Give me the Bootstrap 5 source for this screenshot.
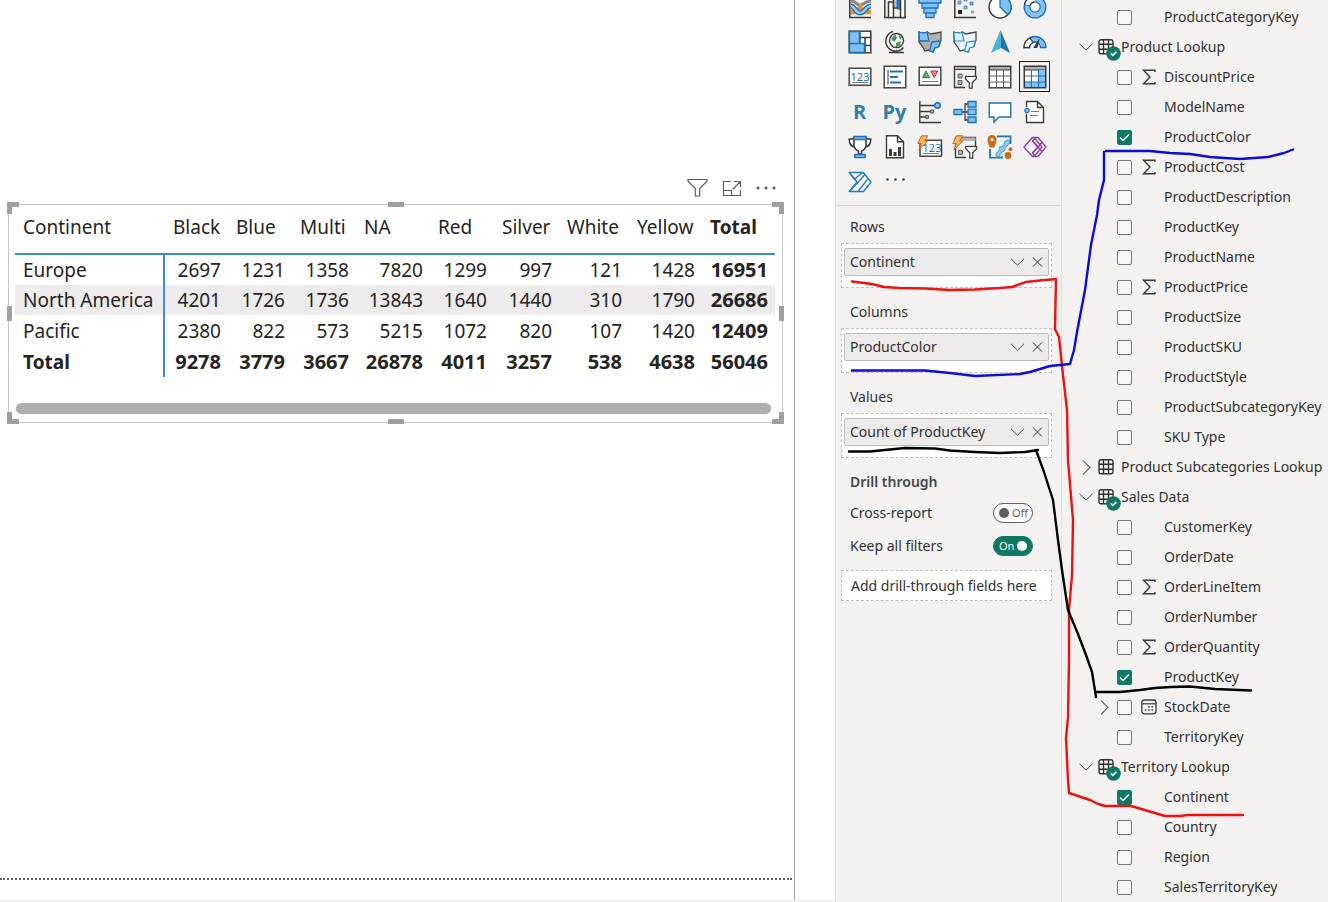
<!DOCTYPE html>
<html lang="en">
<head>
<meta charset="utf-8">
<meta name="viewport" content="width=device-width, initial-scale=1">
<title>Sales by continent and product color</title>
<link href="https://cdn.jsdelivr.net/npm/bootstrap@5.3.0/dist/css/bootstrap.min.css" rel="stylesheet">
<style>
  body { font-family: "Noto Sans", sans-serif; font-size: 14px; line-height: 20px; color: #323130; background: #fff; }
  svg { display: block; flex: none; }
  button { padding: 0; border: 0; background: none; color: inherit; }
  .workspace { min-height: 100vh; }

  /* report canvas */
  .canvas-area { min-width: 0; border-bottom: 2px solid #f3f2f1; }
  .report-page { margin-right: 40px; border-right: 1px solid #a6a6a6; padding: 176px 11px 20px 0; }
  .visual-tools { gap: 14px; height: 24px; padding-right: 7px; color: #605e5c; }
  .visual-frame { margin: 4px 0 0 8px; padding: 0 8px 8px 6px; border: 1px solid #c8c6c4; }
  .handle { position: absolute; background: #a19f9d; }
  .h-top { top: -3px; left: 50%; width: 16px; height: 5px; margin-left: -8px; }
  .h-bottom { bottom: -2px; left: 50%; width: 16px; height: 5px; margin-left: -8px; }
  .h-left { left: -2px; top: 50%; width: 5px; height: 15px; margin-top: -8px; }
  .h-right { right: -2px; top: 50%; width: 5px; height: 15px; margin-top: -8px; }
  .corner { position: absolute; width: 12px; height: 12px; border: 0 solid #a19f9d; }
  .c-tl { top: -3px; left: -2px; border-width: 5px 0 0 5px; }
  .c-tr { top: -3px; right: -2px; border-width: 5px 5px 0 0; }
  .c-bl { bottom: -2px; left: -2px; border-width: 0 0 5px 5px; }
  .c-br { bottom: -2px; right: -2px; border-width: 0 5px 5px 0; }
  .matrix { width: 100%; table-layout: fixed; border-collapse: separate; border-spacing: 0; font-size: 19px; line-height: 30px; color: #252423; white-space: nowrap; }
  .matrix th, .matrix td { padding: 0 7px 0 8px; font-weight: 400; }
  .matrix thead th { height: 50px; padding-right: 0; padding-bottom: 4px; border-bottom: 2px solid #3a8dde; text-align: left; }
  .matrix td { text-align: right; }
  .matrix tbody th { border-right: 2px solid #3a8dde; text-align: left; padding-right: 0; }
  .matrix .band > * { background: #edebeb; }
  .matrix tfoot td, .matrix tfoot th, .matrix td:last-child, .matrix thead th:last-child { font-weight: 700; font-size: 20px; }
  .matrix tbody tr:last-child > * { line-height: 32px; }
  .matrix tfoot th { border-right: 2px solid #3a8dde; text-align: left; }
  .matrix tfoot th, .matrix thead th:last-child { font-size: 19px; }
  .scroll-thumb { height: 11px; margin: 26px 3px 0 1px; border-radius: 6px; background: #b0aeac; }
  .page-edge { border-top: 2px dotted #605e5c; margin-right: -9px; }

  /* side panes */
  .side { background: #f3f2f1; }
  .viz-pane { width: 227px; overflow: hidden; border-left: 1px solid #e1dfdd; border-right: 1px solid #e1dfdd; }
  .viz-grid { display: grid; grid-template-columns: repeat(6, 35px); grid-auto-rows: 35px; margin-top: -11px; padding: 0 0 6px 6px; border-bottom: 1px solid #d8d6d4; }
  .viz-grid button { display: grid; place-items: center; }
  .viz-grid .chosen { outline: 1px solid #201f1e; outline-offset: -3px; }
  .glyph { font-family: "Open Sans", sans-serif; font-weight: 700; font-size: 20px; }
  .viz-grid .glyph { color: #2f7fa8; }
  .wells { padding: 11px 9px 0 5px; }
  .wells h2 { margin: 0 0 6px 9px; font-size: 14px; line-height: 20px; font-weight: 400; }
  .well { height: 45px; margin-bottom: 14px; padding: 4px 2px; border: 1px dashed #c0bebc; background: #fff; }
  .field-chip { height: 28px; padding: 0 5px; gap: 7px; border: 1px solid #bebbb8; border-radius: 2px; background: #edebe9; }
  .wells .drill { margin: 12px 0 0 9px; font-weight: 600; color: #484644; }
  .toggle-row { height: 33px; padding: 0 19px 0 9px; }
  .pill { width: 40px; height: 20px; gap: 3px; padding: 0 4px 0 5px; border: 1px solid #605e5c; border-radius: 10px; background: #fff; font-size: 11px; line-height: 18px; color: #605e5c; }
  .pill input { appearance: none; flex: none; width: 10px; height: 10px; margin: 0; border-radius: 50%; background: #605e5c; }
  .pill.on { border-color: #117865; background: #117865; color: #fff; }
  .pill.on input { background: #fff; }
  .drop-here { margin-top: 8px; height: 31px; line-height: 29px; padding-left: 9px; border: 1px dashed #c0bebc; background: #fff; }

  .data-pane { width: 266px; padding-top: 2px; }
  .trow, .frow { height: 30px; white-space: nowrap; }
  .trow { padding-left: 17px; }
  .trow button { width: 14px; margin-right: 5px; }
  .tbl { width: 23px; height: 16px; position: relative; }
  .tick { position: absolute; left: 8px; top: 7px; }
  .frow { padding-left: 38px; }
  .expand { width: 17px; }
  .frow label { gap: 9px; }
  .kind { width: 16px; margin-right: -2px; }
  .frow input { appearance: none; flex: none; width: 15px; height: 15px; margin: 0; border: 1px solid #797775; border-radius: 2px; background: #f8f7f6; }
  .frow input:checked { border-color: #117865; background: #117865 url("data:image/svg+xml,%3Csvg xmlns='http://www.w3.org/2000/svg' viewBox='0 0 13 13'%3E%3Cpath d='M2 6.5l3 3 6-6' fill='none' stroke='%23fff' stroke-width='1.3'/%3E%3C/svg%3E"); }
  .ink { position: absolute; top: 0; right: 0; pointer-events: none; }
</style>
</head>
<body>
<svg width="0" height="0" class="position-absolute" aria-hidden="true">
  <symbol id="down" viewBox="0 0 14 8"><path d="M.5 .8L7 7.2 13.500 .8" fill="none" stroke="#484644"/></symbol>
  <symbol id="right" viewBox="0 0 8 14"><path d="M.8 .5L7.200 7 .8 13.500" fill="none" stroke="#605e5c"/></symbol>
  <symbol id="close" viewBox="0 0 10 10"><path d="M.5 .5l9 9M9.500 .5l-9 9" fill="none" stroke="#323130"/></symbol>
  <symbol id="grid" viewBox="0 0 16 16"><path d="M3 .8h10a2 2 0 0 1 2 2v10a2 2 0 0 1-2 2H3a2 2 0 0 1-2-2v-10a2 2 0 0 1 2-2zM5.500 .8v14M10.500 .8v14M1 5.300h14M1 10.300h14" fill="none" stroke="#323130" stroke-width="1.400"/></symbol>
  <symbol id="ok" viewBox="0 0 15 15"><circle cx="7.500" cy="7.500" r="7.300" fill="#117865"/><path d="M4.800 7.500l2 1.900 3.600-3.500" fill="none" stroke="#fff" stroke-width="1.500"/></symbol>
  <symbol id="sigma" viewBox="0 0 16 16"><path d="M14 3V1.200H2.500L9 8l-6.500 6.800H14V13" fill="none" stroke="#3b3a39" stroke-width="1.400"/></symbol>
  <symbol id="cal" viewBox="0 0 16 16"><rect x=".8" y="1" width="14.200" height="13.800" rx="2.500" fill="none" stroke="#3b3a39" stroke-width="1.300"/><path d="M1 4.800h14" stroke="#3b3a39" stroke-width="1.200"/><path d="M7.200 7.800h1.500M10.500 7.800H12M3.900 11h1.500M7.200 11h1.500M10.500 11H12" stroke="#3b3a39" stroke-width="1.500"/></symbol>
  <symbol id="bolt" viewBox="0 0 12 16"><path d="M4.500 .8h6.300L7.600 5.800h3.200L2 15l2.200-6.500H.8z" fill="#fcb45c" stroke="#c4671a"/></symbol>
  <symbol id="filt" viewBox="0 0 13 14"><path d="M.7 1h11.600v2L8 7.500V13H5V7.500L.7 3z" fill="#fff" stroke="#3b3a39" stroke-width="1.300"/></symbol>
</svg>

<div class="workspace d-flex">
  <main class="canvas-area flex-grow-1 d-flex flex-column">
    <div class="report-page flex-grow-1 d-flex flex-column">
      <div class="visual-tools d-flex justify-content-end align-items-center">
        <button type="button" aria-label="Filters"><svg width="21" height="20" viewBox="0 0 21 20"><path d="M1 1.500h19v1.700l-7.300 7.300V18H8.300v-7.500L1 3.200z" fill="none" stroke="#605e5c" stroke-width="1.200"/></svg></button>
        <button type="button" aria-label="Focus mode"><svg width="20" height="18" viewBox="0 0 20 18"><path d="M9 2.500H1.500v14h17V11M1.500 11.500h8v5M12 2.500h6.500V8M10.500 10.500l8-8" fill="none" stroke="#605e5c" stroke-width="1.200"/></svg></button>
        <button type="button" aria-label="More options"><svg width="20" height="4" viewBox="0 0 20 4"><g fill="#605e5c"><circle cx="2" cy="2" r="1.600"/><circle cx="10" cy="2" r="1.600"/><circle cx="18" cy="2" r="1.600"/></g></svg></button>
      </div>
      <section class="visual-frame position-relative" aria-label="Matrix">
        <table class="matrix">
          <colgroup><col style="width:150px"><col style="width:63px"><col style="width:64px"><col style="width:64px"><col style="width:74px"><col style="width:64px"><col style="width:65px"><col style="width:70px"><col style="width:73px"><col style="width:73px"></colgroup>
          <thead><tr><th scope="col">Continent</th><th scope="col">Black</th><th scope="col">Blue</th><th scope="col">Multi</th><th scope="col">NA</th><th scope="col">Red</th><th scope="col">Silver</th><th scope="col">White</th><th scope="col">Yellow</th><th scope="col">Total</th></tr></thead>
          <tbody>
            <tr><th scope="row">Europe</th><td>2697</td><td>1231</td><td>1358</td><td>7820</td><td>1299</td><td>997</td><td>121</td><td>1428</td><td>16951</td></tr>
            <tr class="band"><th scope="row">North America</th><td>4201</td><td>1726</td><td>1736</td><td>13843</td><td>1640</td><td>1440</td><td>310</td><td>1790</td><td>26686</td></tr>
            <tr><th scope="row">Pacific</th><td>2380</td><td>822</td><td>573</td><td>5215</td><td>1072</td><td>820</td><td>107</td><td>1420</td><td>12409</td></tr>
          </tbody>
          <tfoot><tr><th scope="row">Total</th><td>9278</td><td>3779</td><td>3667</td><td>26878</td><td>4011</td><td>3257</td><td>538</td><td>4638</td><td>56046</td></tr></tfoot>
        </table>
        <div class="scroll-thumb"></div>
        <span class="corner c-tl"></span><span class="corner c-tr"></span><span class="corner c-bl"></span><span class="corner c-br"></span>
        <span class="handle h-top"></span><span class="handle h-bottom"></span><span class="handle h-left"></span><span class="handle h-right"></span>
      </section>
      <div class="page-edge mt-auto"></div>
    </div>
  </main>

  <div class="side d-flex flex-shrink-0 position-relative">
    <aside class="viz-pane" aria-label="Visualizations">
      <div class="viz-grid">
        <button type="button" aria-label="Ribbon chart"><svg width="24" height="24" viewBox="0 0 24 24" fill="none"><path d="M3 6c5 0 5 4 9 4s5-4 11-4" stroke="#8a8886" stroke-width="3"/><path d="M3 17h5l4-5 4 5h7" stroke="#e8912d" stroke-width="4.500"/><path d="M3 11c4 0 4 7 9 7s5-7 11-7" stroke="#1d70b8" stroke-width="5"/><path d="M3 11c4 0 4 7 9 7s5-7 11-7" stroke="#9ccff7" stroke-width="2.200"/><path d="M1.800 1v21.500H23" stroke="#3b3a39" stroke-width="1.600"/></svg></button>
        <button type="button" aria-label="Waterfall chart"><svg width="24" height="24" viewBox="0 0 24 24" fill="none" stroke="#3b3a39" stroke-width="1.500"><path d="M1.800 1v21.500H23"/><path d="M5.500 22.500V7h5v15.500z" fill="#fff"/><path d="M10.500 1h5v12h-5z" fill="#c8c6c4"/><path d="M14 1v13h3V1z" fill="#2b7fc4" stroke="#1d70b8" stroke-width="1"/><path d="M17.500 22.500V1H22v21.500z" fill="#fff"/></svg></button>
        <button type="button" aria-label="Funnel"><svg width="24" height="24" viewBox="0 0 24 24" fill="#7fc0f5" stroke="#1d70b8" stroke-width="1.300"><path d="M1 1h22v7H1zM4 8h16v5H4zM6 13h12v5H6zM8 18h8v4.500H8z"/></svg></button>
        <button type="button" aria-label="Scatter chart"><svg width="24" height="24" viewBox="0 0 24 24"><path d="M1.800 1v21.500H23" stroke="#3b3a39" stroke-width="1.500" fill="none"/><g fill="#8fb6d8" stroke="#3f7fb5" stroke-width=".8"><path d="M5 6h3v3H5zM11 11h3v3h-3zM17 7h3v3h-3zM11 4h3v2h-3z"/></g><path d="M5 15h4v4H5z" fill="#252423"/><path d="M18 15.500h3v3h-3z" fill="#a19f9d"/></svg></button>
        <button type="button" aria-label="Pie chart"><svg width="24" height="24" viewBox="0 0 24 24"><circle cx="12" cy="12" r="11" fill="#fff" stroke="#3b3a39" stroke-width="1.400"/><path d="M12 1a11 11 0 0 1 7.800 18.800L12 12z" fill="#7fc0f5" stroke="#1d70b8" stroke-width="1.300"/></svg></button>
        <button type="button" aria-label="Donut chart"><svg width="24" height="24" viewBox="0 0 24 24"><circle cx="12" cy="12" r="8" fill="#fff" stroke="#1d70b8" stroke-width="7"/><circle cx="12" cy="12" r="8" fill="none" stroke="#7fc0f5" stroke-width="4.500"/><path d="M12 4a8 8 0 0 0-7.800 6.500" fill="none" stroke="#3b3a39" stroke-width="7"/><path d="M12 4a8 8 0 0 0-7.600 6" fill="none" stroke="#fff" stroke-width="4.500"/></svg></button>

        <button type="button" aria-label="Treemap"><svg width="24" height="24" viewBox="0 0 24 24" stroke-width="1.500"><rect x="1.200" y="1.200" width="21.600" height="21.600" fill="#fff" stroke="#3b3a39"/><path d="M11.500 7.500h11.300M17 7.500v15M17 15.500h6" stroke="#3b3a39"/><path d="M12 1.500v21M1.500 13.500H12" stroke="#1d70b8"/><path d="M1.500 1.500h10v12h-10zM1.500 13.500h15v9h-15z" fill="#7fc0f5" stroke="#1d70b8"/></svg></button>
        <button type="button" aria-label="Map"><svg width="24" height="24" viewBox="0 0 24 24" fill="none" stroke="#3b3a39" stroke-width="1.400"><circle cx="13.500" cy="10.500" r="7" fill="#fff"/><path d="M8.500 8l4-3.500 1.500 3-2 4-3-1zM13 13l5-2-1 5-4 1zM16 5l3.500 3-3 1z" fill="#3f9a58" stroke="none"/><path d="M10 1.500a10 10 0 1 0 10.500 16M13.500 20v2.500M6 22.500h15"/></svg></button>
        <button type="button" aria-label="Filled map"><svg width="24" height="24" viewBox="0 0 24 24"><path d="M1 2q5 2 8 0l4 2 5-1 5-1v8l-2 6-4 1-2 5-4-2-4 1-3-5-3-4z" fill="#b3b0ad" stroke="#4a4846" stroke-width="1.300"/><path d="M1 2q5 2 8 0l2 9H1.500zM14 12l8.500-1-2 6-4 1-1 4-4-1z" fill="#7fc0f5" stroke="#1d70b8" stroke-width="1.300"/></svg></button>
        <button type="button" aria-label="Shape map"><svg width="24" height="24" viewBox="0 0 24 24"><path d="M1 2q5 2 8 0l4 2 5-1 5-1v8l-2 6-4 1-2 5-4-2-4 1-3-5-3-4z" fill="#eef7fd" stroke="#4a4846" stroke-width="1.300"/><path d="M1 2q5 2 8 0l2 9H1.500zM14 12l8.500-1-2 6-4 1-1 4-4-1z" fill="#e3f2fd" stroke="#2b88d8" stroke-width="1.200"/></svg></button>
        <button type="button" aria-label="Azure map"><svg width="24" height="24" viewBox="0 0 24 24"><path d="M12.500 0L3 23l10-5z" fill="#45b5dc"/><path d="M12.500 0L22 23l-9-5z" fill="#2272b4"/></svg></button>
        <button type="button" aria-label="Gauge"><svg width="24" height="24" viewBox="0 0 24 24"><path d="M1 17.500a11 11 0 0 1 22 0h-5.500a5.500 5.500 0 0 0-11 0z" fill="#7fc0f5" stroke="#1d70b8" stroke-width="1.300"/><path d="M1 17.500A11 11 0 0 1 7 8l3 4.500a5.500 5.500 0 0 0-3.500 5z" fill="#fff" stroke="#3b3a39" stroke-width="1.300"/><path d="M11 17.500l5-8-2 8z" fill="#3b3a39" stroke="#3b3a39"/></svg></button>

        <button type="button" aria-label="Card"><svg width="24" height="24" viewBox="0 0 24 24"><rect x="1.200" y="3.200" width="21.600" height="17" fill="#fff" stroke="#3b3a39" stroke-width="1.400"/><text x="12" y="15.500" text-anchor="middle" font-size="11" fill="#1d70b8">123</text><path d="M4 17.500h16" stroke="#7a7775"/></svg></button>
        <button type="button" aria-label="Multi-row card"><svg width="24" height="24" viewBox="0 0 24 24"><rect x="1.200" y="1.200" width="21.600" height="21.600" fill="#fff" stroke="#3b3a39" stroke-width="1.400"/><path d="M5 5v14.500" stroke="#3b3a39"/><path d="M7 6.500h13M7 12h8M7 17.500h11" stroke="#1d70b8" stroke-width="2"/></svg></button>
        <button type="button" aria-label="KPI"><svg width="24" height="24" viewBox="0 0 24 24"><rect x="1.200" y="2.200" width="21.600" height="18" fill="#fff" stroke="#3b3a39" stroke-width="1.400"/><path d="M4.500 12.500L8 6l3.500 6.500z" fill="#5fae6e" stroke="#2c7d3f"/><path d="M12.800 6h7l-3.500 6.500z" fill="#f0868a" stroke="#c4262e"/><path d="M4 16.500h16" stroke="#7a7775"/></svg></button>
        <button type="button" aria-label="Slicer"><svg width="24" height="24" viewBox="0 0 24 24"><path d="M12 22.500H1.500V1.500h21V11" fill="#f3f2f1" stroke="#3b3a39" stroke-width="1.400"/><path d="M1.500 1.500h21v3h-21z" fill="#b3b0ad" stroke="#3b3a39"/><path d="M5 9h4v4H5zM5 15.500h4v4H5z" fill="#b3b0ad" stroke="#605e5c"/><use href="#filt" x="11.500" y="10.500" width="12.500" height="13.500"/></svg></button>
        <button type="button" aria-label="Table"><svg width="24" height="24" viewBox="0 0 24 24" stroke="#3b3a39"><rect x="1.200" y="1.200" width="21.600" height="21.600" fill="#fff" stroke-width="1.400"/><path d="M1.500 1.500h21v3.500h-21z" fill="#b3b0ad"/><path d="M8.500 5v17.500M15.500 5v17.500M1.500 11h21M1.500 17h21" stroke="#605e5c"/></svg></button>
        <button type="button" class="chosen" aria-label="Matrix" aria-pressed="true"><svg width="24" height="24" viewBox="0 0 24 24" stroke="#3b3a39"><rect x="1.200" y="1.200" width="21.600" height="21.600" fill="#fff" stroke-width="1.400"/><path d="M1.500 1.500h21v3.500h-21z" fill="#b3b0ad"/><path d="M15.500 5h7v17.500h-21V17h14z" fill="#7fc0f5" stroke="none"/><path d="M8.500 5v17.500M15.500 5v17.500M1.500 11h21M1.500 17h21" stroke="#1d70b8"/><path d="M1.500 5v17.500h21V5" fill="none"/></svg></button>

        <button type="button" class="glyph">R</button>
        <button type="button" class="glyph">Py</button>
        <button type="button" aria-label="Key influencers"><svg width="24" height="24" viewBox="0 0 24 24" fill="none" stroke="#3b3a39" stroke-width="1.400"><path d="M1.800 1v21.500H23M2 5.500h15M2 11.500h10M2 17h5"/><circle cx="19.500" cy="5.500" r="2.800" fill="#7fc0f5" stroke="#1d70b8"/><circle cx="14" cy="11.500" r="1.600" fill="#c8c6c4" stroke="#605e5c"/><circle cx="9" cy="17" r="1.600" fill="#c8c6c4" stroke="#605e5c"/></svg></button>
        <button type="button" aria-label="Decomposition tree"><svg width="24" height="24" viewBox="0 0 24 24" stroke="#1d70b8" stroke-width="1.300"><path d="M9 12h6M15 4h-3v16h3" fill="none" stroke="#3b3a39"/><path d="M1 9.500h8v5H1zM15 1.500h8v5.500h-8zM15 9.200h8v5.500h-8zM15 17h8v5.500h-8z" fill="#7fc0f5"/></svg></button>
        <button type="button" aria-label="Q&amp;A"><svg width="24" height="24" viewBox="0 0 24 24"><path d="M1.200 3h21.600v14H11l-5 5v-5H1.200z" fill="#fff" stroke="#1d70b8" stroke-width="1.400"/></svg></button>
        <button type="button" aria-label="Smart narrative"><svg width="24" height="24" viewBox="0 0 24 24" fill="none"><path d="M3.500 7V1.500h11l6 6v15h-17v-9M14.500 1.500v6h6" fill="#fff" stroke="#3b3a39" stroke-width="1.400"/><circle cx="4" cy="10.500" r="2.200" fill="#7fc0f5" stroke="#1d70b8" stroke-width="1.200"/><path d="M8 11.500h8M7 15.500h8" stroke="#3b8ac4" stroke-width="1.200"/></svg></button>

        <button type="button" aria-label="Goals"><svg width="24" height="24" viewBox="0 0 24 24" fill="#fff" stroke="#3b3a39" stroke-width="1.500"><path d="M6 4H1.200q0 8 6.300 8M18 4h4.800q0 8-6.300 8" fill="none"/><path d="M6 2h12v9q-1 4-4.500 5v3h-3v-3Q7 15 6 11z"/><path d="M6 1.500h12v3H6zM7 19.500h10v3H7z" fill="#7fc0f5" stroke="#1d70b8"/></svg></button>
        <button type="button" aria-label="Paginated report"><svg width="24" height="24" viewBox="0 0 24 24"><path d="M3.500 .8h11l6 6v16h-17zM14.500 .8v6h6" fill="#fff" stroke="#3b3a39" stroke-width="1.400"/><path d="M6 14h3v7H6zM10.500 17h3v4h-3zM15 12h3v9h-3z" fill="#3b3a39"/></svg></button>
        <button type="button" aria-label="Card (new)"><svg width="26" height="24" viewBox="0 0 26 24"><rect x="3" y="5.200" width="21.500" height="16" fill="#fff" stroke="#3b3a39" stroke-width="1.400"/><text x="15" y="16.500" text-anchor="middle" font-size="11" fill="#1d70b8">123</text><path d="M6 18.500h16" stroke="#7a7775"/><use href="#bolt" x="0" y="0" width="12" height="16"/></svg></button>
        <button type="button" aria-label="Slicer (new)"><svg width="26" height="24" viewBox="0 0 26 24"><path d="M14 22.500H3.500V2.500h20V11" fill="#f3f2f1" stroke="#3b3a39" stroke-width="1.400"/><path d="M9 2.500h14.500v3.500H9z" fill="#b3b0ad"/><path d="M6.500 15.500h4v4h-4z" fill="#b3b0ad" stroke="#605e5c"/><use href="#filt" x="13" y="10.500" width="12.500" height="13.500"/><use href="#bolt" x="0" y="0" width="12" height="16"/></svg></button>
        <button type="button" aria-label="ArcGIS map"><svg width="26" height="24" viewBox="0 0 26 24"><path d="M3 14v8.500h13M10 1.500h13.500V9" fill="none" stroke="#1d70b8" stroke-width="1.800"/><path d="M4 14l6-3V2.500h12.500V7L19 9l-2 6-3 3v4H4z" fill="#edf5fb"/><path d="M22.500 5v4l-4 3-1 4-4 2-1 4H9v-4l3-2 .5-4 4-1 1-4 2-2z" fill="#8cc4f0" stroke="#3f8fd0" stroke-width=".8"/><path d="M5 0a4.500 4.500 0 0 1 4.500 4.500c0 3-1 5-2.500 8H3C1.500 9.500.5 7.500.5 4.500A4.500 4.500 0 0 1 5 0z" fill="#d06a10"/><circle cx="5" cy="4.500" r="1.600" fill="#fff"/><circle cx="21" cy="20.500" r="3.400" fill="#d06a10"/><circle cx="23.500" cy="14.300" r="2" fill="#d06a10"/></svg></button>
        <button type="button" aria-label="Power Apps"><svg width="24" height="24" viewBox="0 0 24 24" fill="none" stroke="#90389a" stroke-width="1.300" stroke-linejoin="round"><path d="M11 2.500H9.500L1 12l8.500 9.500H11"/><path d="M12.500 2.500H15L23 12l-8 9.500h-2.500L9.500 18l5.500-6-5.500-6z"/><path d="M15 12l4-4.500M15 12l4 4.500M9.500 6l5.500 6-5.500 6M11 2.500l8 9.500-8 9.500"/></svg></button>

        <button type="button" aria-label="Power Automate"><svg width="24" height="24" viewBox="0 0 24 24" fill="#fff" stroke="#1f78d1" stroke-width="1.400" stroke-linejoin="round"><path d="M1.200 2.500h14L23 12l-7.500 9.500H1.200L9 12z"/><path d="M3 5l3.500 4.200 8-6.700M2 21L17 4.500M10 21.500l9.500-12.300" fill="none"/></svg></button>
        <button type="button" aria-label="Get more visuals"><svg width="24" height="24" viewBox="0 0 24 24" fill="#3b3a39"><circle cx="4.500" cy="9.500" r="1.200"/><circle cx="12.500" cy="9.500" r="1.200"/><circle cx="20.500" cy="9.500" r="1.200"/></svg></button>
      </div>

      <div class="wells">
        <h2>Rows</h2>
        <div class="well"><div class="field-chip d-flex align-items-center"><span class="flex-grow-1">Continent</span><button type="button" aria-label="Field options"><svg width="15" height="8"><use href="#down"/></svg></button><button type="button" aria-label="Remove field"><svg width="11" height="10"><use href="#close"/></svg></button></div></div>
        <h2>Columns</h2>
        <div class="well"><div class="field-chip d-flex align-items-center"><span class="flex-grow-1">ProductColor</span><button type="button" aria-label="Field options"><svg width="15" height="8"><use href="#down"/></svg></button><button type="button" aria-label="Remove field"><svg width="11" height="10"><use href="#close"/></svg></button></div></div>
        <h2>Values</h2>
        <div class="well"><div class="field-chip d-flex align-items-center"><span class="flex-grow-1">Count of ProductKey</span><button type="button" aria-label="Field options"><svg width="15" height="8"><use href="#down"/></svg></button><button type="button" aria-label="Remove field"><svg width="11" height="10"><use href="#close"/></svg></button></div></div>
        <h2 class="drill">Drill through</h2>
        <div class="mt-1">
          <div class="toggle-row d-flex justify-content-between align-items-center"><span id="cross">Cross-report</span><label class="pill d-flex align-items-center"><input type="checkbox" role="switch" aria-labelledby="cross"><span>Off</span></label></div>
          <div class="toggle-row d-flex justify-content-between align-items-center"><span id="keep">Keep all filters</span><label class="pill on d-flex align-items-center"><span>On</span><input type="checkbox" role="switch" aria-labelledby="keep" checked></label></div>
        </div>
        <div class="drop-here">Add drill-through fields here</div>
      </div>
    </aside>

    <aside class="data-pane" aria-label="Data">
      <div class="frow d-flex align-items-center"><span class="expand"></span><label class="d-flex align-items-center"><input type="checkbox"><span class="kind"></span><span>ProductCategoryKey</span></label></div>
      <div class="trow d-flex align-items-center"><button type="button" aria-label="Collapse"><svg width="14" height="8"><use href="#down"/></svg></button><span class="tbl"><svg width="16" height="16"><use href="#grid"/></svg><svg class="tick" width="15" height="15"><use href="#ok"/></svg></span><span>Product Lookup</span></div>
      <div class="frow d-flex align-items-center"><span class="expand"></span><label class="d-flex align-items-center"><input type="checkbox"><span class="kind"><svg width="16" height="16"><use href="#sigma"/></svg></span><span>DiscountPrice</span></label></div>
      <div class="frow d-flex align-items-center"><span class="expand"></span><label class="d-flex align-items-center"><input type="checkbox"><span class="kind"></span><span>ModelName</span></label></div>
      <div class="frow d-flex align-items-center"><span class="expand"></span><label class="d-flex align-items-center"><input type="checkbox" checked><span class="kind"></span><span>ProductColor</span></label></div>
      <div class="frow d-flex align-items-center"><span class="expand"></span><label class="d-flex align-items-center"><input type="checkbox"><span class="kind"><svg width="16" height="16"><use href="#sigma"/></svg></span><span>ProductCost</span></label></div>
      <div class="frow d-flex align-items-center"><span class="expand"></span><label class="d-flex align-items-center"><input type="checkbox"><span class="kind"></span><span>ProductDescription</span></label></div>
      <div class="frow d-flex align-items-center"><span class="expand"></span><label class="d-flex align-items-center"><input type="checkbox"><span class="kind"></span><span>ProductKey</span></label></div>
      <div class="frow d-flex align-items-center"><span class="expand"></span><label class="d-flex align-items-center"><input type="checkbox"><span class="kind"></span><span>ProductName</span></label></div>
      <div class="frow d-flex align-items-center"><span class="expand"></span><label class="d-flex align-items-center"><input type="checkbox"><span class="kind"><svg width="16" height="16"><use href="#sigma"/></svg></span><span>ProductPrice</span></label></div>
      <div class="frow d-flex align-items-center"><span class="expand"></span><label class="d-flex align-items-center"><input type="checkbox"><span class="kind"></span><span>ProductSize</span></label></div>
      <div class="frow d-flex align-items-center"><span class="expand"></span><label class="d-flex align-items-center"><input type="checkbox"><span class="kind"></span><span>ProductSKU</span></label></div>
      <div class="frow d-flex align-items-center"><span class="expand"></span><label class="d-flex align-items-center"><input type="checkbox"><span class="kind"></span><span>ProductStyle</span></label></div>
      <div class="frow d-flex align-items-center"><span class="expand"></span><label class="d-flex align-items-center"><input type="checkbox"><span class="kind"></span><span>ProductSubcategoryKey</span></label></div>
      <div class="frow d-flex align-items-center"><span class="expand"></span><label class="d-flex align-items-center"><input type="checkbox"><span class="kind"></span><span>SKU Type</span></label></div>
      <div class="trow d-flex align-items-center"><button type="button" aria-label="Expand"><svg class="mx-auto" width="9" height="15"><use href="#right"/></svg></button><span class="tbl"><svg width="16" height="16"><use href="#grid"/></svg></span><span>Product Subcategories Lookup</span></div>
      <div class="trow d-flex align-items-center"><button type="button" aria-label="Collapse"><svg width="14" height="8"><use href="#down"/></svg></button><span class="tbl"><svg width="16" height="16"><use href="#grid"/></svg><svg class="tick" width="15" height="15"><use href="#ok"/></svg></span><span>Sales Data</span></div>
      <div class="frow d-flex align-items-center"><span class="expand"></span><label class="d-flex align-items-center"><input type="checkbox"><span class="kind"></span><span>CustomerKey</span></label></div>
      <div class="frow d-flex align-items-center"><span class="expand"></span><label class="d-flex align-items-center"><input type="checkbox"><span class="kind"></span><span>OrderDate</span></label></div>
      <div class="frow d-flex align-items-center"><span class="expand"></span><label class="d-flex align-items-center"><input type="checkbox"><span class="kind"><svg width="16" height="16"><use href="#sigma"/></svg></span><span>OrderLineItem</span></label></div>
      <div class="frow d-flex align-items-center"><span class="expand"></span><label class="d-flex align-items-center"><input type="checkbox"><span class="kind"></span><span>OrderNumber</span></label></div>
      <div class="frow d-flex align-items-center"><span class="expand"></span><label class="d-flex align-items-center"><input type="checkbox"><span class="kind"><svg width="16" height="16"><use href="#sigma"/></svg></span><span>OrderQuantity</span></label></div>
      <div class="frow d-flex align-items-center"><span class="expand"></span><label class="d-flex align-items-center"><input type="checkbox" checked><span class="kind"></span><span>ProductKey</span></label></div>
      <div class="frow d-flex align-items-center"><button type="button" class="expand" aria-label="Expand"><svg width="9" height="15"><use href="#right"/></svg></button><label class="d-flex align-items-center"><input type="checkbox"><span class="kind"><svg width="16" height="16"><use href="#cal"/></svg></span><span>StockDate</span></label></div>
      <div class="frow d-flex align-items-center"><span class="expand"></span><label class="d-flex align-items-center"><input type="checkbox"><span class="kind"></span><span>TerritoryKey</span></label></div>
      <div class="trow d-flex align-items-center"><button type="button" aria-label="Collapse"><svg width="14" height="8"><use href="#down"/></svg></button><span class="tbl"><svg width="16" height="16"><use href="#grid"/></svg><svg class="tick" width="15" height="15"><use href="#ok"/></svg></span><span>Territory Lookup</span></div>
      <div class="frow d-flex align-items-center"><span class="expand"></span><label class="d-flex align-items-center"><input type="checkbox" checked><span class="kind"></span><span>Continent</span></label></div>
      <div class="frow d-flex align-items-center"><span class="expand"></span><label class="d-flex align-items-center"><input type="checkbox"><span class="kind"></span><span>Country</span></label></div>
      <div class="frow d-flex align-items-center"><span class="expand"></span><label class="d-flex align-items-center"><input type="checkbox"><span class="kind"></span><span>Region</span></label></div>
      <div class="frow d-flex align-items-center"><span class="expand"></span><label class="d-flex align-items-center"><input type="checkbox"><span class="kind"></span><span>SalesTerritoryKey</span></label></div>
    </aside>

    <!-- hand-drawn links from each well to its field -->
    <svg class="ink" width="492" height="902" viewBox="836 0 492 902" fill="none" stroke-width="2.400" stroke-linecap="round" stroke-linejoin="round" aria-hidden="true">
      <path stroke="#ee1111" d="M852 281.500L864 283 872 284 884 287 900 288 925 288.500 950 290 975 289.500 1000 288 1012 287 1026 282 1040 280.500 1056 279 1055 329 1059 337 1063 375 1067 410 1068 460 1073 520 1072 575 1069 610 1069 660 1068 718 1066 738 1068 780 1069 793 1090 800 1098 804 1105 806 1131 806 1148 811 1165 816 1180 816 1188 815 1243 815"/>
      <path stroke="#0b0be0" d="M852 370.500H925L950 373 975 376 1020 374 1030 372 1050 366 1070 364 1074 350 1077 332 1085 290 1091 245 1097 215 1099 200 1104 180 1104 152M1106 151H1150L1170 153 1190 154 1210 157 1240 159 1268 157 1284 153 1293 149.500"/>
      <path stroke="#000" d="M849 451.500H870L890 449.500 905 448 935 448.500 950 450.500 975 452 1000 453 1025 452 1038 450M1036 450L1044 472 1053 500 1058 540 1062 570 1068 610 1078 634 1086 655 1092 672 1096 697M1097 692H1120L1140 690 1155 688 1170 687 1190 686.500 1215 689 1251 690.500"/>
    </svg>
  </div>
</div>
<script src="https://cdn.jsdelivr.net/npm/bootstrap@5.3.0/dist/js/bootstrap.bundle.min.js"></script>
</body>
</html>
